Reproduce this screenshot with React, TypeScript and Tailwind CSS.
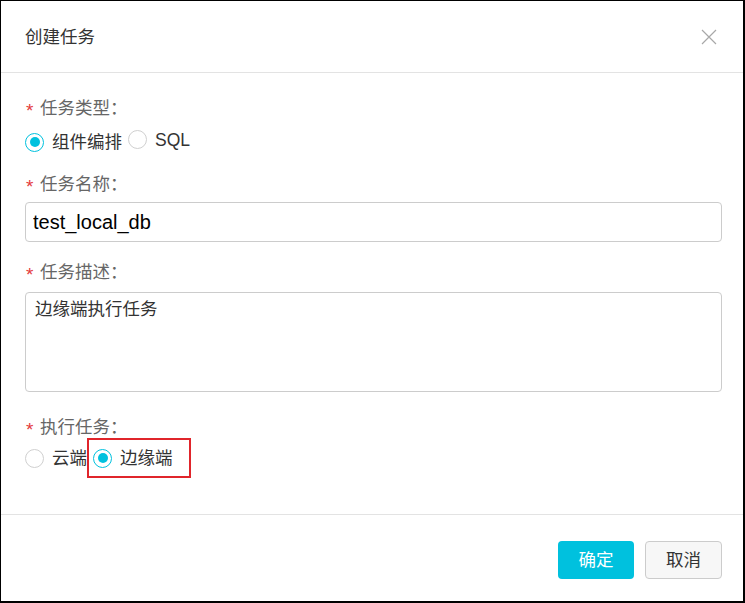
import { useState } from "react";

const FONT = { fontFamily: '"Liberation Sans", "Noto Sans CJK SC", sans-serif' };

function Label({ text }: { text: string }) {
  return (
    <div className="flex h-[24px] items-center text-[17.5px] leading-[24px] text-[#666]">
      <span className="inline-block w-[15px] pl-[1px] pt-[5px] text-[19px] leading-[24px] text-[#e4393c]">*</span>
      <span>{text}</span>
    </div>
  );
}

function Radio({ checked, label, onClick }: { checked: boolean; label: string; onClick: () => void }) {
  return (
    <span className="inline-flex cursor-pointer items-center" onClick={onClick}>
      <span
        className={`flex h-[19px] w-[19px] items-center justify-center rounded-full border-[1.5px] bg-white ${
          checked ? "border-[#00c1de]" : "border-[#d0d0d0]"
        }`}
      >
        {checked && <span className="h-[10px] w-[10px] rounded-full bg-[#00c1de]" />}
      </span>
      <span className="ml-[8px] text-[17.5px] leading-[24px] text-[#333]">{label}</span>
    </span>
  );
}

export default function App() {
  const [kind, setKind] = useState("flow");
  const [where, setWhere] = useState("edge");

  return (
    <div
      style={FONT}
      className="flex h-[603px] w-[745px] flex-col border-l border-t border-r-2 border-b-2 border-black bg-white"
    >
      {/* header */}
      <div className="flex h-[72px] shrink-0 items-center justify-between border-b border-[#e3e3e3] pl-[24px] pr-[26px]">
        <span className="text-[17.5px] leading-[24px] text-[#333]">创建任务</span>
        <svg width="16" height="16" viewBox="0 0 16 16" className="text-[#a8a8a8]">
          <path d="M1 1L15 15M15 1L1 15" stroke="currentColor" strokeWidth="1.2" fill="none" />
        </svg>
      </div>

      {/* body */}
      <div className="flex flex-1 flex-col pl-[24px] pr-[21px] pt-[23px]">
        <Label text="任务类型：" />
        <div className="mt-[10px] flex h-[24px] items-center">
          <Radio checked={kind === "flow"} label="组件编排" onClick={() => setKind("flow")} />
          <span className="ml-[6px]">
            <Radio checked={kind === "sql"} label="SQL" onClick={() => setKind("sql")} />
          </span>
        </div>

        <div className="mt-[18px]">
          <Label text="任务名称：" />
        </div>
        <input
          defaultValue="test_local_db"
          className="mt-[6px] h-[40px] w-full rounded-[4px] border border-[#cccccc] px-[7px] text-[20px] text-black outline-none"
          style={FONT}
        />

        <div className="mt-[18px]">
          <Label text="任务描述：" />
        </div>
        <textarea
          defaultValue="边缘端执行任务"
          className="mt-[8px] h-[100px] w-full resize-none rounded-[4px] border border-[#cccccc] px-[9px] pt-[4px] text-[17.5px] leading-[24px] text-[#333] outline-none"
          style={FONT}
        />

        <div className="mt-[23px]">
          <Label text="执行任务：" />
        </div>
        <div className="-mt-[1px] flex h-[40px] items-center">
          <Radio checked={where === "cloud"} label="云端" onClick={() => setWhere("cloud")} />
          <span className="flex h-[40px] w-[104px] items-center border-2 border-[#e0252b] pl-[4px]">
            <Radio checked={where === "edge"} label="边缘端" onClick={() => setWhere("edge")} />
          </span>
        </div>
      </div>

      {/* footer */}
      <div className="flex h-[87px] shrink-0 justify-end gap-[11px] border-t border-[#e3e3e3] pr-[21px] pt-[26px]">
        <button
          type="button"
          className="h-[38px] w-[76px] rounded-[4px] bg-[#00c1de] text-[17.5px] text-white"
        >
          确定
        </button>
        <button
          type="button"
          className="h-[38px] w-[77px] rounded-[4px] border border-[#cccccc] bg-[#f7f7f7] text-[17.5px] text-[#333]"
        >
          取消
        </button>
      </div>
    </div>
  );
}
